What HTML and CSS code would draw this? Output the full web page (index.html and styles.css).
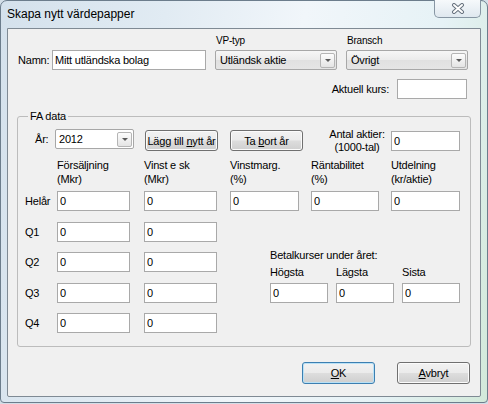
FILE: index.html
```html
<!DOCTYPE html>
<html lang="sv">
<head>
<meta charset="utf-8">
<title>Skapa nytt värdepapper</title>
<link rel="stylesheet" href="styles.css">
</head>
<body>
<div class="window">
  <div class="titlebar">
    <span class="title">Skapa nytt värdepapper</span>
    <div class="close">
      <svg width="14" height="11" viewBox="0 0 14 11">
        <path d="M3 2 L11 9 M11 2 L3 9" stroke="#66717d" stroke-width="4" stroke-linecap="round" fill="none"/>
        <path d="M3 2 L11 9 M11 2 L3 9" stroke="#ffffff" stroke-width="2" stroke-linecap="round" fill="none"/>
      </svg>
    </div>
  </div>
  <div class="client">
    <div class="row1">
      <div class="namn">
        <label class="namn-label">Namn:</label>
        <input class="tb tb-namn" type="text" value="Mitt utländska bolag">
      </div>
      <div class="field">
        <div class="cap">VP-typ</div>
        <div class="combo list w-wide"><span>Utländsk aktie</span><span class="arrow"></span></div>
      </div>
      <div class="field">
        <div class="cap">Bransch</div>
        <div class="combo list w-wide"><span>Övrigt</span><span class="arrow"></span></div>
      </div>
    </div>
    <div class="row2">
      <label class="kurs-label">Aktuell kurs:</label>
      <input class="tb tb-kurs" type="text" value="">
    </div>
    <fieldset class="group">
      <legend>FA data</legend>
      <div class="rowA">
        <label class="yr-label">År:</label>
        <div class="combo edit w-yr"><span>2012</span><span class="arrow"></span></div>
        <button class="btn btn-add">Lägg till <u>n</u>ytt år</button>
        <button class="btn btn-del">Ta <u>b</u>ort år</button>
        <div class="antal-label">Antal aktier:<br>(1000-tal)</div>
        <input class="tb tb-antal" type="text" value="0">
      </div>
      <div class="cols heads">
        <div></div>
        <div>Försäljning<br>(Mkr)</div>
        <div>Vinst e sk<br>(Mkr)</div>
        <div>Vinstmarg.<br>(%)</div>
        <div>Räntabilitet<br>(%)</div>
        <div>Utdelning<br>(kr/aktie)</div>
      </div>
      <div class="cols data">
        <div class="betal">
          <div class="betal-title">Betalkurser under året:</div>
          <div class="betal-row">
            <div class="betal-col"><div class="betal-cap">Högsta</div><input class="tb tb-betal" type="text" value="0"></div>
            <div class="betal-col"><div class="betal-cap">Lägsta</div><input class="tb tb-betal" type="text" value="0"></div>
            <div class="betal-col"><div class="betal-cap">Sista</div><input class="tb tb-betal" type="text" value="0"></div>
          </div>
        </div>

        <div class="rowlabel">Helår</div>
        <input class="tb w1" type="text" value="0">
        <input class="tb w2" type="text" value="0">
        <input class="tb w3" type="text" value="0">
        <input class="tb w4" type="text" value="0">
        <input class="tb w5" type="text" value="0">

        <div class="rowlabel">Q1</div>
        <input class="tb w1" type="text" value="0">
        <input class="tb w2" type="text" value="0">

        <div class="rowlabel">Q2</div>
        <input class="tb w1" type="text" value="0">
        <input class="tb w2" type="text" value="0">

        <div class="rowlabel">Q3</div>
        <input class="tb w1" type="text" value="0">
        <input class="tb w2" type="text" value="0">

        <div class="rowlabel">Q4</div>
        <input class="tb w1" type="text" value="0">
        <input class="tb w2" type="text" value="0">
      </div>
    </fieldset>
    <div class="actions">
      <button class="btn btn-default"><u>O</u>K</button>
      <button class="btn"><u>A</u>vbryt</button>
    </div>
  </div>
</div>
</body>
</html>
```
FILE: styles.css
```css
html, body {
  margin: 0;
  padding: 0;
}
body {
  width: 488px;
  height: 404px;
  overflow: hidden;
  background: #d3dee7;
  font-family: "Liberation Sans", Arial, sans-serif;
}

.window {
  box-sizing: border-box;
  width: 488px;
  height: 403px;
  border: 1px solid #6c7d8c;
  border-radius: 7px 7px 4px 4px;
  padding: 0 6px 5px 6px;
  background: linear-gradient(100deg, #d4e1ec 0%, #e1ebf3 30%, #f1f6fa 55%, #e6f2f6 80%, #d2e9da 100%);
  display: flex;
  flex-direction: column;
}

.titlebar {
  height: 27px;
  flex: none;
  display: flex;
  justify-content: space-between;
  align-items: flex-start;
}
.title {
  font-size: 12px;
  line-height: 14px;
  margin-top: 6px;
  color: #000;
}
.close {
  box-sizing: border-box;
  width: 47px;
  height: 18px;
  margin-top: -1px;
  border: 1px solid #8796a3;
  border-top: none;
  border-radius: 0 0 5px 5px;
  background: linear-gradient(#f6f9fb, #dfe8ef);
  display: flex;
  align-items: center;
  justify-content: center;
}
.close svg { display: block; }

.client {
  box-sizing: border-box;
  height: 369px;
  flex: none;
  border: 1px solid #7f8a94;
  border-radius: 0 0 2px 2px;
  background: #f0f0f0;
  font-size: 11px;
  letter-spacing: -0.2px;
  color: #000;
}

/* text boxes */
.tb {
  box-sizing: border-box;
  height: 20px;
  margin: 0;
  border: 1px solid #a9a9a9;
  padding: 0 0 0 2px;
  background: #fff;
  font: inherit;
  letter-spacing: inherit;
  color: #000;
  outline: none;
}

/* combos */
.combo {
  box-sizing: border-box;
  height: 20px;
  display: flex;
  align-items: center;
  justify-content: space-between;
  border: 1px solid #a7a7a7;
  border-radius: 2px;
  padding: 0 1px 0 4px;
}
.combo.list {
  background: linear-gradient(#f6f6f6, #ebebeb 50%, #e0e0e0 51%, #e5e5e5);
}
.combo.edit {
  background: #fff;
  padding-left: 3px;
}
.w-wide { width: 122px; }
.w-yr { width: 79px; }
.arrow {
  box-sizing: border-box;
  width: 15px;
  height: 15px;
  border: 1px solid #b5b5b5;
  border-radius: 2px;
  background: linear-gradient(#fdfdfd, #e4e4e4);
  display: flex;
  align-items: center;
  justify-content: center;
}
.arrow::after {
  content: "";
  width: 0;
  height: 0;
  border-left: 3px solid transparent;
  border-right: 3px solid transparent;
  border-top: 3px solid #5a5a5a;
}

/* buttons */
.btn {
  box-sizing: border-box;
  margin: 0;
  padding: 0;
  border: 1px solid #707070;
  border-radius: 3px;
  background: linear-gradient(#f2f2f2 0%, #ebebeb 48%, #dddddd 52%, #cfcfcf 100%);
  box-shadow: inset 0 0 0 1px #fbfbfb;
  font: inherit;
  letter-spacing: inherit;
  color: #000;
}
.btn-default {
  border-color: #3c7fb1;
  box-shadow: inset 0 0 0 1px #b9e1f6;
}

/* top rows */
.row1 {
  display: flex;
  align-items: flex-end;
  margin: 6px 0 0 10px;
}
.namn {
  display: flex;
  align-items: center;
}
.namn-label { width: 34px; }
.tb-namn { width: 154px; }
.field {
  display: flex;
  flex-direction: column;
  margin-left: 9px;
}
.cap {
  font-size: 10px;
  line-height: 12px;
  margin: 0 0 3px 1px;
}

.row2 {
  display: flex;
  justify-content: flex-end;
  align-items: center;
  margin: 9px 13px 0 0;
}
.kurs-label { margin-right: 8px; }
.tb-kurs { width: 70px; }

/* group box */
.group {
  margin: 11px 9px 0 9px;
  padding: 0 0 13px 0;
  border: 1px solid #bcbcbc;
  border-radius: 3px;
  min-width: 0;
}
.group legend {
  padding: 0 2px;
  margin-left: 10px;
  font-size: 11px;
  line-height: 13px;
}

.rowA {
  display: flex;
  align-items: flex-start;
  margin-top: 6px;
}
.yr-label {
  width: 20px;
  margin-left: 17px;
  line-height: 20px;
}
.btn-add {
  width: 73px;
  height: 21px;
  margin: 1px 0 0 11px;
}
.btn-del {
  width: 73px;
  height: 21px;
  margin: 1px 0 0 12px;
}
.antal-label {
  width: 68px;
  margin: -1px 0 0 20px;
  line-height: 13px;
  text-align: center;
}
.tb-antal {
  width: 69px;
  margin-top: 2px;
}

.cols {
  display: grid;
  grid-template-columns: 39px 87px 86px 81px 80px 68px;
}
.heads {
  margin-top: 4px;
  line-height: 14px;
}
.data {
  margin-top: 5px;
  grid-template-rows: repeat(5, 20px);
  row-gap: 10.5px;
}
.rowlabel {
  grid-column: 1;
  padding-left: 7px;
  align-self: center;
}
.w1, .w2 { width: 73px; }
.w3 { width: 69px; }
.w4 { width: 68px; }
.w5 { width: 69px; }

.betal {
  grid-column: 4 / 7;
  grid-row: 2 / 5;
  align-self: end;
  padding-left: 40px;
}
.betal-title {
  line-height: 14px;
  margin-bottom: 3px;
}
.betal-row {
  display: flex;
  gap: 8px;
}
.betal-col { width: 58px; }
.betal-cap {
  line-height: 14px;
  margin-bottom: 4px;
}
.tb-betal { width: 58px; }

/* dialog buttons */
.actions {
  display: flex;
  justify-content: flex-end;
  gap: 22px;
  margin: 15px 10px 0 0;
}
.actions .btn {
  width: 73px;
  height: 22px;
}
```
